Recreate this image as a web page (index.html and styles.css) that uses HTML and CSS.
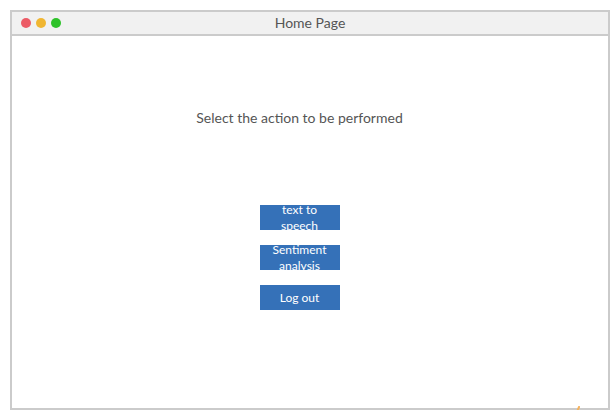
FILE: index.html
```html
<!DOCTYPE html>
<html>
<head>
<meta charset="utf-8">
<link rel="stylesheet" href="styles.css">
</head>
<body>
<div class="window">
  <div class="titlebar">
    <div class="dots">
      <span class="dot red"></span>
      <span class="dot yellow"></span>
      <span class="dot green"></span>
    </div>
    <div class="title">Home Page</div>
  </div>
  <div class="content">
    <p class="prompt">Select the action to be performed</p>
    <div class="actions">
      <button class="btn">text to speech</button>
      <button class="btn">Sentiment analysis</button>
      <button class="btn">Log out</button>
    </div>
  </div>
</div>
<svg class="mark" width="6" height="8" viewBox="0 0 6 8"><line x1="1.5" y1="7" x2="4" y2="1" stroke="#f5b25e" stroke-width="2" stroke-linecap="round"/></svg>
</body>
</html>
```
FILE: styles.css
```css
* { box-sizing: border-box; }
html, body { margin: 0; padding: 0; background: #fff; }
body { position: relative; font-family: Lato, "Open Sans", sans-serif; color: #555; }
.window {
  position: relative;
  margin: 10px 0 0 10px;
  width: 600px;
  height: 400px;
  border: 2px solid #cbcbcb;
  background: #fff;
}
.titlebar {
  position: relative;
  height: 24px;
  background: #f1f1f1;
  border-bottom: 2px solid #cbcbcb;
  display: flex;
  align-items: center;
  justify-content: center;
}
.dots {
  position: absolute;
  left: 9px;
  top: 6px;
  display: flex;
  gap: 5px;
}
.dot { width: 10px; height: 10px; border-radius: 50%; display: block; }
.red { background: #ec5b66; }
.yellow { background: #f0b632; }
.green { background: #2ec22a; }
.title { font-size: 14px; color: #555; line-height: 16px; }
.content {
  display: flex;
  flex-direction: column;
  align-items: center;
  padding-right: 21px;
}
.prompt {
  margin: 73px 0 0 0;
  font-size: 14px;
  line-height: 17px;
  color: #555;
}
.actions {
  margin-top: 79px;
  display: flex;
  flex-direction: column;
  gap: 15px;
}
.btn {
  width: 80px;
  height: 25px;
  padding: 0 4px;
  border: none;
  background: #3571b8;
  color: #fff;
  font-family: Lato, sans-serif;
  font-size: 12px;
  line-height: 16px;
  overflow: hidden;
  display: flex;
  align-items: center;
  justify-content: center;
  text-align: center;
}
.mark { position: absolute; left: 575px; top: 406px; }
```
